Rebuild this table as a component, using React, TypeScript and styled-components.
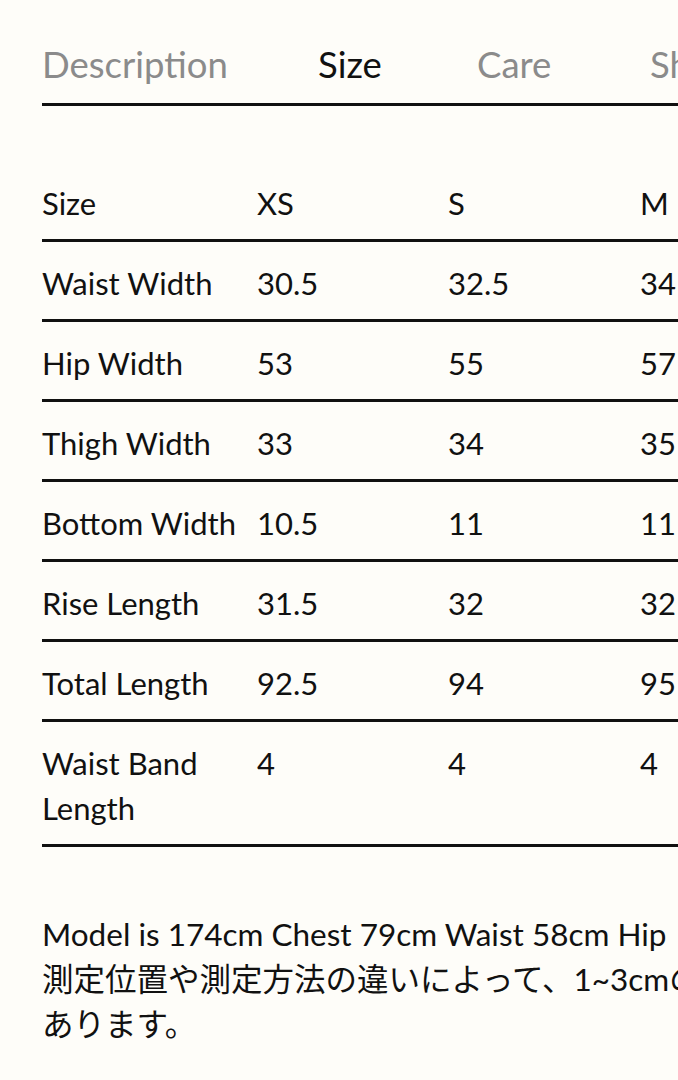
import React from "react";
import styled, { createGlobalStyle } from "styled-components";

const Global = createGlobalStyle`
  html, body { margin: 0; padding: 0; background: #fefdf9; overflow: hidden; }
  body { font-family: "Lato", "Noto Sans CJK JP", sans-serif; color: #111; }
`;

const Page = styled.div`
  width: 1100px;
  padding: 0 0 0 42px;
  box-sizing: border-box;
`;

const Tabs = styled.div`
  display: flex;
  padding-top: 40px;
  padding-bottom: 15px;
  border-bottom: 3px solid #111;
  width: 636px;
`;

const Tab = styled.div<{ $active?: boolean; $w: number }>`
  width: ${(p) => p.$w}px;
  flex: none;
  font-size: 36.5px;
  line-height: 48px;
  white-space: nowrap;
  color: ${(p) => (p.$active ? "#111" : "#8b8b8b")};
`;

const Table = styled.div`
  margin-top: 56px;
  display: flex;
  flex-direction: column;
`;

const Row = styled.div`
  display: grid;
  grid-template-columns: 215px 191px 192px 192px;
  padding: 19px 0 13px;
  border-bottom: 3px solid #111;
  font-size: 31px;
  line-height: 45px;
  width: 636px;
`;

const Label = styled.div`
  padding-right: 8px;
`;

const Cell = styled.div`
  white-space: nowrap;
`;

const Note = styled.div`
  margin-top: 65px;
  font-size: 31.5px;
  line-height: 45px;
  white-space: nowrap;
`;

const rows: [string, string, string, string][] = [
  ["Size", "XS", "S", "M"],
  ["Waist Width", "30.5", "32.5", "34"],
  ["Hip Width", "53", "55", "57"],
  ["Thigh Width", "33", "34", "35"],
  ["Bottom Width", "10.5", "11", "11"],
  ["Rise Length", "31.5", "32", "32"],
  ["Total Length", "92.5", "94", "95"],
  ["Waist Band Length", "4", "4", "4"],
];

export default function App() {
  return (
    <Page>
      <Global />
      <Tabs>
        <Tab $w={276}>Description</Tab>
        <Tab $w={159} $active>
          Size
        </Tab>
        <Tab $w={173}>Care</Tab>
        <Tab $w={120}>Shipping</Tab>
      </Tabs>
      <Table>
        {rows.map((r) => (
          <Row key={r[0]}>
            <Label>{r[0]}</Label>
            <Cell>{r[1]}</Cell>
            <Cell>{r[2]}</Cell>
            <Cell>{r[3]}</Cell>
          </Row>
        ))}
      </Table>
      <Note>
        Model is 174cm Chest 79cm Waist 58cm Hip
        <br />
        測定位置や測定方法の違いによって、1~3cmの誤差が生じる場合が
        <br />
        あります。
      </Note>
    </Page>
  );
}
